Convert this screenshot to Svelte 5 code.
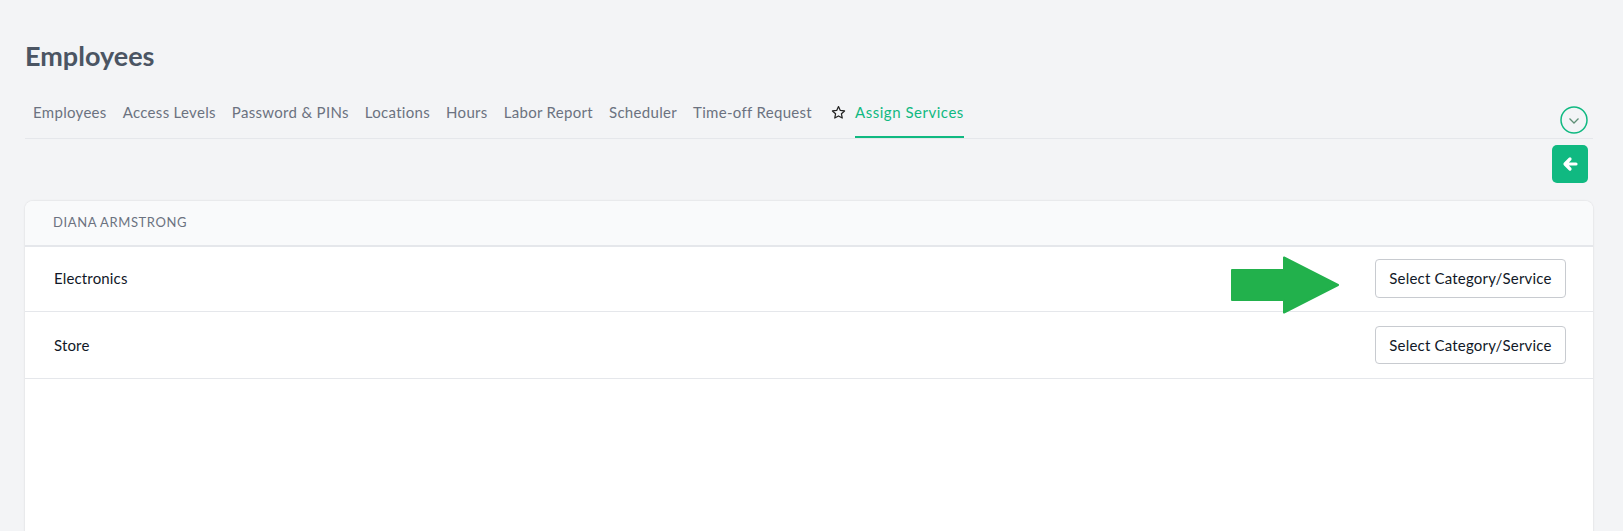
<script>
  const tabs = ['Employees','Access Levels','Password & PINs','Locations','Hours','Labor Report','Scheduler','Time-off Request'];
  const rows = ['Electronics','Store'];
</script>

<div class="page">
  <h1>Employees</h1>
  <div class="navwrap">
    <nav>
      {#each tabs as t}
        <span class="tab">{t}</span>
      {/each}
      <svg class="star" viewBox="0 0 24 24" width="15" height="15" fill="none" stroke="#222" stroke-width="2" stroke-linejoin="round"><path d="M12 2.5l2.9 6.2 6.8.8-5 4.6 1.3 6.7-6-3.3-6 3.3 1.3-6.7-5-4.6 6.8-.8z"/></svg>
      <span class="tab active">Assign Services</span>
    </nav>
    <span class="circle">
      <svg viewBox="0 0 28 28" width="28" height="28" fill="none"><circle cx="14" cy="14" r="13" stroke="#10b981" stroke-width="1.5"/><path d="M9.5 12.5l4.5 4.5 4.5-4.5" stroke="#5f8f76" stroke-width="1.3"/></svg>
    </span>
  </div>
  <div class="actions">
    <button class="back" aria-label="Back">
      <svg viewBox="0 0 16 16" width="16" height="16" fill="none" stroke="#fff" stroke-width="3.2" stroke-linecap="round" stroke-linejoin="round"><path d="M14 8H4M8 3L3 8l5 5"/></svg>
    </button>
  </div>
  <section class="card">
    <header>DIANA ARMSTRONG</header>
    {#each rows as r}
      <div class="row">
        <span>{r}</span>
        <button class="select">Select Category/Service</button>
      </div>
    {/each}
    <svg class="arrow" viewBox="0 0 109 58" width="109" height="58"><path d="M1 14h52V1.5L107 29 53 56.5V44H1z" fill="#22b14c" stroke="#22b14c" stroke-width="2" stroke-linejoin="round"/></svg>
  </section>
</div>

<style>
  :global(body) { margin: 0; background: #f3f4f6; overflow: hidden; }
  .page { height: 531px; box-sizing: border-box; padding: 40px 30px 0 25px; font-family: Lato, "Open Sans", sans-serif; overflow: hidden; }
  h1 { margin: 0; font-size: 27px; line-height: 32px; font-weight: 700; color: #4b5563; }
  .navwrap { display: flex; justify-content: space-between; align-items: flex-end; border-bottom: 1px solid #e5e7eb; margin-top: 21px; height: 46px; box-sizing: border-box; }
  nav { display: flex; align-items: center; height: 45px; padding-left: 8px; }
  .tab { font-size: 15px; letter-spacing: .31px; color: #6b7280; margin-right: 16px; white-space: nowrap; line-height: 39px; padding-bottom: 4px; border-bottom: 2px solid transparent; }
  .tab.active { color: #10b981; border-bottom-color: #10b981; margin-right: 0; letter-spacing: .52px; }
  .star { margin-right: 9px; margin-left: 3px; margin-top: -6px; }
  .circle { display: block; height: 28px; margin-right: 5px; margin-bottom: 4px; }
  .actions { display: flex; justify-content: flex-end; margin-top: 6px; padding-right: 5px; }
  .back { width: 36px; height: 38px; border: 0; border-radius: 5px; background: #10b981; display: flex; align-items: center; justify-content: center; padding: 0; }
  .card { position: relative; margin-top: 18px; height: 400px; background: #fff; border-radius: 8px; box-shadow: 0 0 2px rgba(0,0,0,.15); overflow: hidden; }
  header { height: 46px; box-sizing: border-box; padding: 0 28px 2px; display: flex; align-items: center; font-size: 13px; letter-spacing: .6px; color: #6b7280; background: #f9fafb; border-bottom: 2px solid #e5e7eb; }
  .row { height: 65px; box-sizing: border-box; display: flex; align-items: center; justify-content: space-between; padding: 0 27px 2px 29px; border-bottom: 1px solid #e5e7eb; color: #111827; font-size: 15px; letter-spacing: .15px; }
  .row:nth-of-type(2) { height: 67px; padding-bottom: 1px; }
  .select { width: 191px; height: 39px; background: #fff; border: 1px solid #c8cbd0; border-radius: 4px; font: inherit; font-size: 15px; letter-spacing: .2px; color: #111827; padding: 0; }
  .row:nth-of-type(2) .select { height: 38px; }
  .arrow { position: absolute; left: 1206px; top: 55px; }
</style>
